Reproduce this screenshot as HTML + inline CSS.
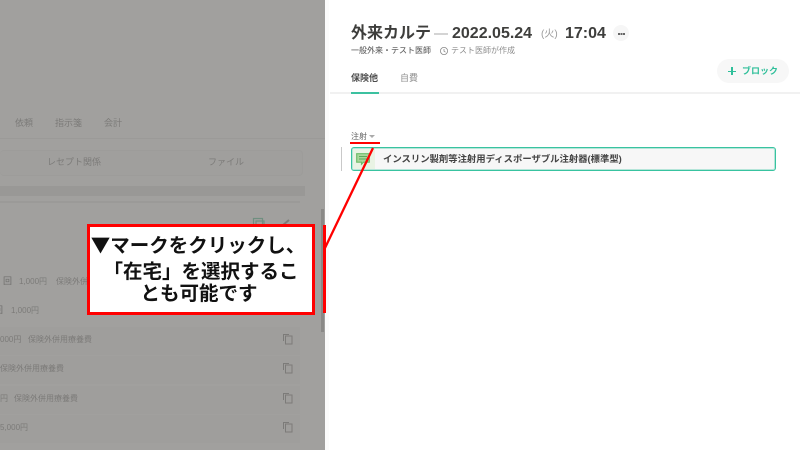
<!DOCTYPE html>
<html><head><meta charset="utf-8">
<style>
html,body{margin:0;padding:0;width:800px;height:450px;overflow:hidden;background:#fff}
body{font-family:"Liberation Sans","Noto Sans CJK JP",sans-serif;position:relative}
.a{position:absolute;white-space:nowrap;line-height:1}
.g{color:#7c7b79}
.row{position:absolute;left:0;width:300px;height:28px;background:#9f9e9c}
.c{position:absolute;left:87px;width:228px;text-align:center;white-space:nowrap;color:#111;font-family:'Noto Sans CJK JP','Liberation Sans',sans-serif;font-weight:700;font-size:19.500px;line-height:24px}
</style></head><body>
<!-- left dim panel -->
<div class="a" style="left:0;top:0;width:325px;height:450px;background:#a1a09e"></div>
<div class="a" style="left:325px;top:0;width:4px;height:450px;background:#fbfbfb"></div>
<div class="a g" style="left:15px;top:119px;font-size:9px">依頼</div>
<div class="a g" style="left:55px;top:119px;font-size:9px">指示箋</div>
<div class="a g" style="left:104px;top:119px;font-size:9px">会計</div>
<div class="a" style="left:0;top:138px;width:325px;height:1px;background:#9b9a98"></div>
<div class="a" style="left:0;top:150px;width:302px;height:24px;background:#a09f9d;border:1px solid #9d9c9a;border-left:0;border-radius:4px"></div>
<div class="a g" style="left:47px;top:158px;font-size:9px">レセプト関係</div>
<div class="a g" style="left:208px;top:158px;font-size:9px">ファイル</div>
<div class="a" style="left:0;top:186px;width:305px;height:10px;background:#999896"></div>
<div class="a" style="left:0;top:201px;width:300px;height:2px;background:#9b9a98"></div>
<svg class="a" style="left:250px;top:216px" width="45" height="10" viewBox="0 0 45 10" fill="none"><rect x="3.500" y="2.500" width="9" height="9" stroke="#6f8f80" stroke-width="1.200"/><rect x="6" y="5" width="8" height="9" stroke="#6f8f80" stroke-width="1.200"/><path d="M33 9l6-5" stroke="#7c7b79" stroke-width="2"/></svg>
<div class="row" style="top:327px"></div>
<div class="row" style="top:356px"></div>
<div class="row" style="top:386px"></div>
<div class="row" style="top:415px"></div>
<div class="a g" style="left:3px;top:277px;font-size:9px;color:#6f6e6c">回</div>
<div class="a g" style="left:19px;top:278px;font-size:8px">1,000円</div>
<div class="a g" style="left:56px;top:278px;font-size:8px">保険外併用療養費</div>
<div class="a g" style="left:-6px;top:306px;font-size:9px;color:#6f6e6c">回</div>
<div class="a g" style="left:11px;top:307px;font-size:8px">1,000円</div>
<div class="a g" style="left:0;top:336px;font-size:8px">000円</div>
<div class="a g" style="left:28px;top:336px;font-size:8px">保険外併用療養費</div>
<div class="a g" style="left:0;top:365px;font-size:8px">保険外併用療養費</div>
<div class="a g" style="left:0;top:395px;font-size:8px">円</div>
<div class="a g" style="left:14px;top:395px;font-size:8px">保険外併用療養費</div>
<div class="a g" style="left:0;top:424px;font-size:8px">5,000円</div>
<svg class="a" style="left:282px;top:333px" width="12" height="105" viewBox="0 0 12 105" fill="none" stroke="#7c7b79" stroke-width="1">
<path d="M1.500 8V1.500H7"/><rect x="3.500" y="3" width="6.500" height="8"/>
<path d="M1.500 37V30.500H7"/><rect x="3.500" y="32" width="6.500" height="8"/>
<path d="M1.500 67V60.500H7"/><rect x="3.500" y="62" width="6.500" height="8"/>
<path d="M1.500 96V89.500H7"/><rect x="3.500" y="91" width="6.500" height="8"/>
</svg>
<!-- scrollbar -->
<div class="a" style="left:321px;top:209px;width:3px;height:123px;background:#8a8987"></div>

<!-- right panel -->
<div class="a" style="left:351px;top:26px;font-size:16px;font-weight:700;color:#3e3e3c">外来カルテ</div>
<div class="a" style="left:434px;top:33px;width:14px;height:2px;background:#d4d4d4"></div>
<div class="a" style="left:452px;top:26px;font-size:16px;font-weight:700;color:#3e3e3c">2022.05.24</div>
<div class="a" style="left:541px;top:30px;font-size:10px;color:#9a9a9a">(火)</div>
<div class="a" style="left:565px;top:26px;font-size:16px;font-weight:700;color:#3e3e3c">17:04</div>
<div class="a" style="left:613px;top:25px;width:16px;height:16px;border-radius:50%;background:#f6f6f6"></div>
<div class="a" style="left:618px;top:33px;width:1.500px;height:1.500px;background:#666;box-shadow:2.500px 0 #666,5px 0 #666"></div>
<div class="a" style="left:351px;top:47px;font-size:8px;font-weight:500;color:#6a6a6a">一般外来・テスト医師</div>
<svg class="a" style="left:439px;top:46px" width="10" height="10" viewBox="0 0 10 10" fill="none" stroke="#8a8a8a" stroke-width=".8"><circle cx="5" cy="5" r="3.600"/><path d="M5 3v2.200l1.500 1"/></svg>
<div class="a" style="left:451px;top:47px;font-size:8px;color:#8d8d8d">テスト医師が作成</div>
<div class="a" style="left:351px;top:74px;font-size:9px;font-weight:700;color:#4b4b4b">保険他</div>
<div class="a" style="left:400px;top:74px;font-size:9px;color:#8f8f8f">自費</div>
<div class="a" style="left:330px;top:92px;width:470px;height:2px;background:#f1f1f1"></div>
<div class="a" style="left:351px;top:92px;width:28px;height:2px;background:#3cc1a0"></div>
<div class="a" style="left:717px;top:59px;width:72px;height:24px;border-radius:12px;background:#f7f7f7"></div>
<div class="a" style="left:728px;top:70.500px;width:8px;height:1.500px;background:#2fbf9a"></div>
<div class="a" style="left:731.250px;top:67px;width:1.500px;height:8px;background:#2fbf9a"></div>
<div class="a" style="left:742px;top:67px;font-size:9px;font-weight:700;color:#2fbf9a">ブロック</div>

<div class="a" style="left:351px;top:133px;font-size:8px;color:#6a6a6a">注射</div>
<div class="a" style="left:369px;top:135px;width:0;height:0;border-left:3px solid transparent;border-right:3px solid transparent;border-top:3px solid #aaa"></div>
<div class="a" style="left:341px;top:147px;width:1px;height:24px;background:#c9c9c9"></div>
<div class="a" style="left:351px;top:147px;width:423px;height:22px;border:1px solid #38c3a0;border-radius:3px;background:#f7f7f7;box-shadow:inset 0 0 0 1px rgba(56,195,160,.35)"></div>
<div class="a" style="left:353px;top:149px;width:22px;height:20px;background:#e9f3e4"></div>
<svg class="a" style="left:356px;top:153px" width="14" height="13" viewBox="0 0 14 13"><path d="M.700.700h12.600v8.500H7.500l-2 2v-2H.700z" fill="#a9d69a" stroke="#6dbd6a" stroke-width="1.200"/><path d="M3 3.500h8M3 6h8" stroke="#5aa85a" stroke-width="1"/></svg>
<div class="a" style="left:383px;top:155px;font-size:9.350px;font-weight:700;color:#444">インスリン製剤等注射用ディスポーザブル注射器(標準型)</div>

<!-- red annotations -->
<div class="a" style="left:350px;top:142px;width:30px;height:2px;background:#f00"></div>
<svg class="a" style="left:320px;top:140px" width="60" height="180" viewBox="0 0 60 180"><path d="M53 8L4 110" stroke="#f00" stroke-width="2.300" fill="none"/></svg>
<div class="a" style="left:323px;top:225px;width:3px;height:88px;background:#f00"></div>
<div style="position:absolute;left:87px;top:224px;width:222px;height:85px;border:3px solid #f00;background:#fff"></div>
<div class="c" style="top:232px;margin-left:-3px">▼マークをクリックし、</div>
<div class="c" style="top:258px">「在宅」を選択するこ</div>
<div class="c" style="top:280px;margin-left:-2px">とも可能です</div>
</body></html>
